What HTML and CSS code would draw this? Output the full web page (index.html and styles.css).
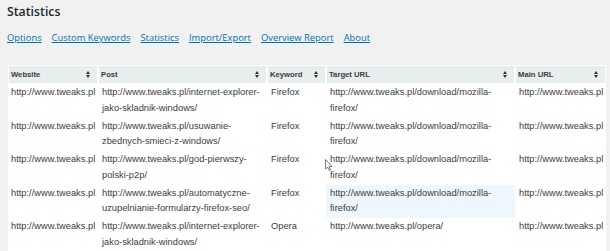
FILE: index.html
```html
<!DOCTYPE html>
<html lang="en">
<head>
    <meta charset="UTF-8">
    <title>Statistics</title>
    <link rel="stylesheet" href="styles.css">
</head>
<body>
    <h2>Statistics</h2>
    <div class="nav">
        <a href="#">Options</a>
        <a href="#">Custom Keywords</a>
        <a href="#">Statistics</a>
        <a href="#">Import/Export</a>
        <a href="#">Overview Report</a>
        <a href="#">About</a>
    </div>

    <table class="stats">
        <colgroup>
            <col class="c-site">
            <col class="c-post">
            <col class="c-key">
            <col class="c-target">
            <col class="c-main">
        </colgroup>
        <thead>
            <tr>
                <th>Website <span class="sort"></span></th>
                <th>Post <span class="sort"></span></th>
                <th>Keyword <span class="sort"></span></th>
                <th>Target URL <span class="sort"></span></th>
                <th>Main URL <span class="sort"></span></th>
            </tr>
        </thead>
        <tbody>
            <tr>
                <td>http://www.tweaks.pl</td>
                <td>http://www.tweaks.pl/internet-explorer-jako-skladnik-windows/</td>
                <td>Firefox</td>
                <td>http://www.tweaks.pl/download/mozilla-firefox/</td>
                <td>http://www.tweaks.pl</td>
            </tr>
            <tr>
                <td>http://www.tweaks.pl</td>
                <td>http://www.tweaks.pl/usuwanie-zbednych-smieci-z-windows/</td>
                <td>Firefox</td>
                <td>http://www.tweaks.pl/download/mozilla-firefox/</td>
                <td>http://www.tweaks.pl</td>
            </tr>
            <tr>
                <td>http://www.tweaks.pl</td>
                <td>http://www.tweaks.pl/god-pierwszy-polski-p2p/</td>
                <td>Firefox</td>
                <td class="has-cursor">http://www.tweaks.pl/download/mozilla-firefox/
                    <svg class="cursor" width="8" height="12" viewBox="0 0 8 12"><path d="M0.5 0.5 L0.5 10 L2.6 8 L4.2 11.5 L5.6 10.9 L4.1 7.5 L7 7.5 Z" fill="#fff" stroke="#555" stroke-width="0.8"/></svg>
                </td>
                <td>http://www.tweaks.pl</td>
            </tr>
            <tr>
                <td>http://www.tweaks.pl</td>
                <td>http://www.tweaks.pl/automatyczne-uzupelnianie-formularzy-firefox-seo/</td>
                <td>Firefox</td>
                <td class="hover">http://www.tweaks.pl/download/mozilla-firefox/</td>
                <td>http://www.tweaks.pl</td>
            </tr>
            <tr>
                <td>http://www.tweaks.pl</td>
                <td>http://www.tweaks.pl/internet-explorer-jako-skladnik-windows/</td>
                <td>Opera</td>
                <td>http://www.tweaks.pl/opera/</td>
                <td>http://www.tweaks.pl</td>
            </tr>
        </tbody>
    </table>
</body>
</html>
```

FILE: styles.css
```css
body {
    margin: 0;
    padding: 4px 4px 0 7px;
    background-color: #f1f1f1;
    font-family: "Open Sans", sans-serif;
    color: #23282d;
}
h2 {
    margin: 0;
    font-size: 12.3px;
    font-weight: 600;
    line-height: 16px;
}
.nav {
    display: flex;
    gap: 10px;
    margin-top: 11px;
    font-size: 9.4px;
    line-height: 13px;
}
.nav a {
    color: #0073aa;
    text-decoration: underline;
}
.stats {
    margin: 21px 0 0 1px;
    width: 598px;
    table-layout: fixed;
    border-collapse: separate;
    border-spacing: 0;
    background-color: #fff;
    font-family: "Liberation Sans", Arial, sans-serif;
    text-align: left;
}
.c-site { width: 90px; }
.c-post { width: 169px; }
.c-key { width: 59px; }
.c-target { width: 189px; }
.c-main { width: 91px; }
.stats th {
    position: relative;
    background-color: #e6eeee;
    border: 1px solid #fff;
    padding: 0 3px 0 2px;
    font-size: 7.7px;
    font-weight: bold;
    line-height: 17px;
    color: #3d3d3d;
}
.sort {
    position: absolute;
    right: 6px;
    top: 5px;
    width: 5px;
    height: 7px;
}
.sort::before, .sort::after {
    content: "";
    position: absolute;
    left: 0;
    border-left: 2.5px solid transparent;
    border-right: 2.5px solid transparent;
}
.sort::before {
    top: 0;
    border-bottom: 3px solid #333;
}
.sort::after {
    bottom: 0;
    border-top: 3px solid #333;
}
.stats td {
    padding: 1px 3px 1px 4px;
    vertical-align: top;
    font-size: 9.3px;
    line-height: 15.75px;
    color: #3d3d3d;
}
.stats td:first-child {
    padding-left: 3px;
}
.stats td.hover {
    background-color: #eef6fe;
}
.has-cursor {
    position: relative;
}
.cursor {
    position: absolute;
    left: -1px;
    top: 8px;
}
```
